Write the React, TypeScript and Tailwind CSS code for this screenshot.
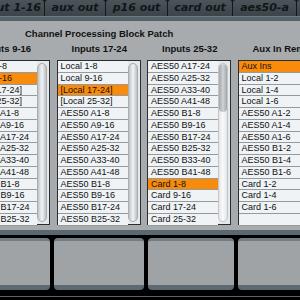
import React from "react";

type ListDef = { items: string[]; hl: number; thumb: "full" | "top" | "none" };

const inputsA = [
  "Local 1-8",
  "Local 9-16",
  "[Local 17-24]",
  "[Local 25-32]",
  "AES50 A1-8",
  "AES50 A9-16",
  "AES50 A17-24",
  "AES50 A25-32",
  "AES50 A33-40",
  "AES50 A41-48",
  "AES50 B1-8",
  "AES50 B9-16",
  "AES50 B17-24",
  "AES50 B25-32",
];

const lists: ListDef[] = [
  { items: inputsA, hl: 1, thumb: "full" },
  { items: inputsA, hl: 2, thumb: "full" },
  {
    items: [
      "AES50 A17-24",
      "AES50 A25-32",
      "AES50 A33-40",
      "AES50 A41-48",
      "AES50 B1-8",
      "AES50 B9-16",
      "AES50 B17-24",
      "AES50 B25-32",
      "AES50 B33-40",
      "AES50 B41-48",
      "Card 1-8",
      "Card 9-16",
      "Card 17-24",
      "Card 25-32",
    ],
    hl: 10,
    thumb: "top",
  },
  {
    items: [
      "Aux Ins",
      "Local 1-2",
      "Local 1-4",
      "Local 1-6",
      "AES50 A1-2",
      "AES50 A1-4",
      "AES50 A1-6",
      "AES50 B1-2",
      "AES50 B1-4",
      "AES50 B1-6",
      "Card 1-2",
      "Card 1-4",
      "Card 1-6",
      "",
    ],
    hl: 0,
    thumb: "none",
  },
];

const headers = ["Inputs 9-16", "Inputs 17-24", "Inputs 25-32", "Aux In Remap"];

const tabs = [
  { label: "out 1-16", w: "w-[58px]" },
  { label: "aux out", w: "w-[60px]" },
  { label: "p16 out", w: "w-[61px]" },
  { label: "card out", w: "w-[64px]" },
  { label: "aes50-a", w: "w-[63px]" },
  { label: "aes50-b", w: "w-[62px]" },
];

function ScrollBar({ kind }: { kind: "full" | "top" | "none" }) {
  if (kind === "none") return null;
  if (kind === "full") {
    return (
      <div className="w-[10px] shrink-0 my-[2px] mr-[2px] rounded-[5px] border border-[#a9adb0] bg-gradient-to-r from-[#bfc3c6] via-[#f2f3f4] to-[#bcc0c3]" />
    );
  }
  return (
    <div className="w-[10px] shrink-0 my-[2px] mr-[2px] rounded-[5px] border border-[#c3c6c9] bg-gradient-to-r from-[#e4e6e8] via-[#fafafa] to-[#e0e2e4] flex flex-col overflow-hidden">
      <div className="h-[48px] rounded-[5px] bg-gradient-to-r from-[#a4a8ab] via-[#d0d3d5] to-[#a2a6a9]" />
    </div>
  );
}

function List({ def }: { def: ListDef }) {
  return (
    <div className="w-[84px] h-[165px] shrink-0 border border-[#2a2e30] bg-[#e6e9eb] flex">
      <div className="flex-1 flex flex-col min-w-0">
        {def.items.map((t, i) => (
          <div
            key={i}
            className={
              "h-[11.75px] shrink-0 border-b border-[#959a9e] pl-[3px] text-[9px] leading-[11px] whitespace-nowrap overflow-hidden font-['Liberation_Sans',Arial,sans-serif] text-[#111] " +
              (i === def.hl ? "bg-[#f98b0c]" : "bg-[#eff3f5]")
            }
          >
            {t}
          </div>
        ))}
      </div>
      <ScrollBar kind={def.thumb} />
    </div>
  );
}

export default function App() {
  return (
    <div className="w-[300px] h-[300px] overflow-hidden bg-black flex flex-col">
      {/* Tab bar */}
      <div className="h-[16px] shrink-0 bg-[#15191b] flex gap-px ml-[-14px]">
        {tabs.map((t) => (
          <div
            key={t.label}
            className={
              t.w +
              " shrink-0 h-[16px] rounded-t-[3px] bg-gradient-to-b from-[#4a545a] to-[#3b4449] text-center text-[11px] leading-[16px] font-bold italic whitespace-nowrap font-['DejaVu_Sans',sans-serif] text-[#121618]"
            }
          >
            {t.label}
          </div>
        ))}
      </div>
      <div className="h-[5px] shrink-0 bg-[#55626a] border-t border-[#6e7b83]" />

      {/* Main panel */}
      <div className="h-[209px] shrink-0 bg-[#a7abae] flex flex-col pt-[7px] overflow-hidden">
        <div className="h-[12px] pl-[25px] text-[9.5px] leading-[12px] font-bold whitespace-nowrap font-['Liberation_Sans',Arial,sans-serif] text-[#111]">
          Channel Processing Block Patch
        </div>
        <div className="mt-[3px] h-[12px] flex gap-[6.5px] ml-[-34px]">
          {headers.map((h) => (
            <div
              key={h}
              className="w-[84px] shrink-0 pl-[15px] text-[9.5px] leading-[12px] font-bold whitespace-nowrap font-['Liberation_Sans',Arial,sans-serif] text-[#111]"
            >
              {h}
            </div>
          ))}
        </div>
        <div className="mt-[5px] flex gap-[6.5px] ml-[-34px]">
          {lists.map((l, i) => (
            <List key={i} def={l} />
          ))}
        </div>
      </div>

      {/* Bottom area */}
      <div className="h-[5px] shrink-0 bg-[#5a6871]" />
      <div className="h-[3px] shrink-0 bg-black" />
      <div className="h-[52px] shrink-0 flex gap-[4px] ml-[-40px]">
        {["w-[90px]", "w-[90px]", "w-[86px]", "w-[90px]"].map((w, i) => (
          <div
            key={i}
            className={
              w +
              " shrink-0 rounded-[4px] bg-[#9fa3a6] border-t-[3px] border-b-[5px] border-t-[#6f7d86] border-b-[#5c6971]"
            }
          />
        ))}
      </div>
      <div className="h-[6px] shrink-0 bg-black" />
      <div className="h-px shrink-0 bg-[#5f6468]" />
      <div className="h-[3px] shrink-0 bg-black" />
    </div>
  );
}
